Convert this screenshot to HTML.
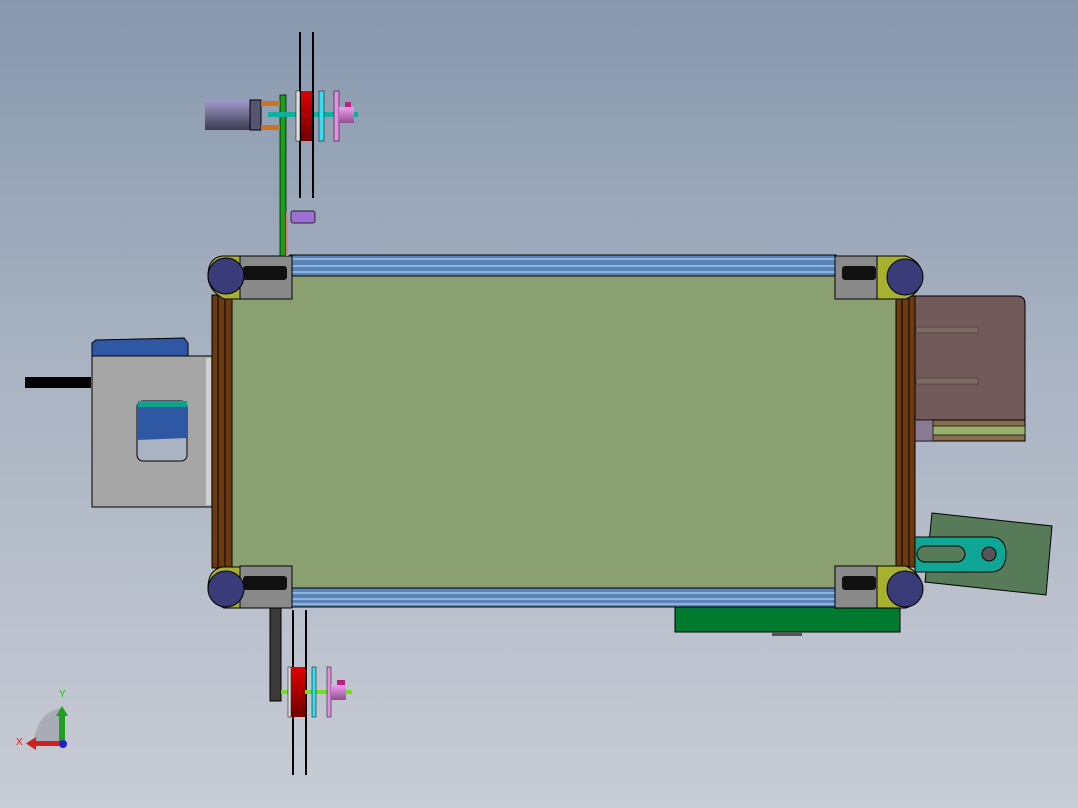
<!DOCTYPE html>
<html><head><style>
html,body{margin:0;padding:0;height:808px}
body{width:1078px;height:808px;overflow:hidden;background:linear-gradient(#8798ad,#a9b3c2 45%,#c8ccd5);font-family:"Liberation Sans",sans-serif}
svg{display:block}
</style></head><body>
<svg width="1078" height="808" viewBox="0 0 1078 808" xmlns="http://www.w3.org/2000/svg">
<defs>
<linearGradient id="mot" x1="0" y1="0" x2="0" y2="1"><stop offset="0" stop-color="#a49ccc"/><stop offset="1" stop-color="#3a3a50"/></linearGradient>
<linearGradient id="red" x1="0" y1="0" x2="0" y2="1"><stop offset="0" stop-color="#e00000"/><stop offset="1" stop-color="#700000"/></linearGradient>
<linearGradient id="pk" x1="0" y1="0" x2="0" y2="1"><stop offset="0" stop-color="#f0a0f0"/><stop offset="1" stop-color="#905090"/></linearGradient>
</defs>
<rect x="25" y="377" width="66" height="11" fill="#000"/>
<path d="M92 343 L96 340 L184 338 L188 343 L188 440 L92 440 Z" fill="#2e58a4" stroke="#000"/>
<rect x="92" y="356" width="120" height="151" fill="#a6a6a6" stroke="#000"/>
<rect x="206" y="358" width="5" height="147" fill="#d0d0d0"/>
<rect x="137" y="401" width="50" height="60" rx="6" fill="#a9b3c2" stroke="#000"/>
<path d="M137 407 Q137 401 143 401 L181 401 Q187 401 187 407 L187 438 L137 440 Z" fill="#2e58a4"/>
<rect x="138" y="401" width="49" height="6" fill="#10a090"/>
<path d="M915 296 L1017 296 Q1025 296 1025 304 L1025 420 L915 420 Z" fill="#735a5a" stroke="#000"/>
<rect x="916" y="327" width="62" height="6" fill="#7d6a60" stroke="#333" stroke-width="0.5"/>
<rect x="916" y="378" width="62" height="6" fill="#7d6a60" stroke="#333" stroke-width="0.5"/>
<rect x="915" y="420" width="110" height="21" fill="#8a6e50" stroke="#000"/>
<rect x="930" y="426" width="95" height="9" fill="#9aae6e" stroke="#000" stroke-width="0.7"/>
<rect x="915" y="420" width="18" height="21" fill="#8a7a90" stroke="#000" stroke-width="0.7"/>
<polygon points="932,513 1052,526 1046,595 925,582" fill="#577a58" stroke="#000"/>
<path d="M915 537 L990 537 Q1006 537 1006 554 Q1006 572 990 572 L915 572 Z" fill="#10a696" stroke="#000"/>
<rect x="917" y="546" width="48" height="16" rx="8" fill="#577a58" stroke="#000"/>
<circle cx="989" cy="554" r="7" fill="#555" stroke="#000"/>
<rect x="675" y="605" width="225" height="27" fill="#007a2e" stroke="#000"/>
<rect x="772" y="632" width="30" height="4" fill="#555"/>
<rect x="230" y="270" width="668" height="322" fill="#8ba070" stroke="#000"/>
<g fill="#5a84b8" stroke="#000" stroke-width="1">
<rect x="290" y="255" width="546" height="21"/>
<rect x="290" y="588" width="546" height="19"/>
</g>
<g stroke="#9cc4ea" stroke-width="1.5">
<line x1="291" y1="259" x2="835" y2="259"/><line x1="291" y1="266" x2="835" y2="266"/><line x1="291" y1="272" x2="835" y2="272"/>
<line x1="291" y1="593" x2="835" y2="593"/><line x1="291" y1="599" x2="835" y2="599"/><line x1="291" y1="604" x2="835" y2="604"/>
</g>
<g fill="#6b3a10" stroke="#000">
<rect x="212" y="295" width="20" height="273"/>
<rect x="896" y="296" width="19" height="271"/>
</g>
<g stroke="#000"><line x1="218" y1="295" x2="218" y2="568"/><line x1="225" y1="295" x2="225" y2="568"/><line x1="902" y1="296" x2="902" y2="567"/><line x1="909" y1="296" x2="909" y2="567"/></g>
<g>
<path d="M222 256 L292 256 L292 299 L224 299 Q208 290 208 276 Q208 258 222 256Z" fill="#a8b030" stroke="#000"/>
<rect x="240" y="256" width="52" height="43" fill="#8a8a8a" stroke="#000"/>
<rect x="243" y="266" width="44" height="14" rx="3" fill="#111"/>
<circle cx="226" cy="276" r="18" fill="#3a3c7a" stroke="#000"/>
</g>
<g>
<path d="M835 256 L906 256 Q922 262 922 276 Q922 292 906 299 L835 299 Z" fill="#a8b030" stroke="#000"/>
<rect x="835" y="256" width="42" height="43" fill="#8a8a8a" stroke="#000"/>
<rect x="842" y="266" width="34" height="14" rx="3" fill="#111"/>
<circle cx="905" cy="277" r="18" fill="#3a3c7a" stroke="#000"/>
</g>
<g>
<path d="M222 567 L292 567 L292 608 L224 608 Q208 600 208 588 Q208 570 222 567Z" fill="#a8b030" stroke="#000"/>
<rect x="240" y="566" width="52" height="42" fill="#8a8a8a" stroke="#000"/>
<rect x="243" y="576" width="44" height="14" rx="3" fill="#111"/>
<circle cx="226" cy="589" r="18" fill="#3a3c7a" stroke="#000"/>
</g>
<g>
<path d="M835 566 L906 566 Q922 574 922 589 Q922 602 906 608 L835 608 Z" fill="#a8b030" stroke="#000"/>
<rect x="835" y="566" width="42" height="42" fill="#8a8a8a" stroke="#000"/>
<rect x="842" y="576" width="34" height="14" rx="3" fill="#111"/>
<circle cx="905" cy="589" r="18" fill="#3a3c7a" stroke="#000"/>
</g>
<rect x="280" y="95" width="6" height="161" fill="#19a019" stroke="#000" stroke-width="0.7"/>
<rect x="286" y="213" width="2" height="43" fill="#f07090"/>
<rect x="291" y="211" width="24" height="12" rx="2" fill="#9a70d0" stroke="#000" stroke-width="0.7"/>
<rect x="205" y="100" width="45" height="30" fill="url(#mot)"/>
<rect x="250" y="100" width="11" height="30" fill="#555570" stroke="#000"/>
<rect x="261" y="101" width="19" height="5" fill="#d07020"/>
<rect x="261" y="125" width="19" height="5" fill="#d07020"/>
<rect x="268" y="112" width="90" height="5" fill="#10b0a0"/>
<line x1="300" y1="32" x2="300" y2="198" stroke="#000" stroke-width="2"/>
<line x1="313" y1="32" x2="313" y2="198" stroke="#000" stroke-width="2"/>
<rect x="296" y="91" width="4" height="50" fill="#ddd" stroke="#000" stroke-width="0.5"/>
<rect x="301" y="91" width="11" height="50" fill="url(#red)"/>
<rect x="319" y="91" width="5" height="50" fill="#30e0f0" stroke="#000" stroke-width="0.5"/>
<rect x="334" y="91" width="5" height="50" fill="#e090e0" stroke="#000" stroke-width="0.5"/>
<rect x="339" y="107" width="15" height="16" fill="url(#pk)"/>
<rect x="345" y="102" width="6" height="5" fill="#c02080"/>
<rect x="270" y="608" width="11" height="93" fill="#3a3a3a" stroke="#000"/>
<line x1="293" y1="610" x2="293" y2="775" stroke="#000" stroke-width="2"/>
<line x1="306" y1="610" x2="306" y2="775" stroke="#000" stroke-width="2"/>
<rect x="281" y="690" width="71" height="4" fill="#70e020"/>
<rect x="288" y="667" width="3" height="50" fill="#ddd" stroke="#000" stroke-width="0.5"/>
<rect x="291" y="667" width="14" height="50" fill="url(#red)"/>
<rect x="312" y="667" width="4" height="50" fill="#30e0f0" stroke="#000" stroke-width="0.5"/>
<rect x="327" y="667" width="4" height="50" fill="#e090e0" stroke="#000" stroke-width="0.5"/>
<rect x="331" y="685" width="15" height="15" fill="url(#pk)"/>
<rect x="337" y="680" width="8" height="5" fill="#c02080"/>
<path d="M34 744 Q36 712 62 708 L62 744 Z" fill="#a8acb4"/>
<rect x="59" y="714" width="6" height="30" fill="#20a020"/>
<polygon points="56,716 62,706 68,716" fill="#20a020"/>
<rect x="34" y="741" width="28" height="5" fill="#d02020"/>
<polygon points="36,737 26,743.5 36,750" fill="#d02020"/>
<circle cx="63" cy="744" r="4" fill="#2020d0"/>
<text x="59" y="697" font-size="10" fill="#20c020">Y</text>
<text x="16" y="745" font-size="10" fill="#e02020">X</text>
</svg>
</body></html>
